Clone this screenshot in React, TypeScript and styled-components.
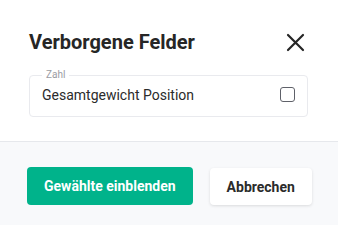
import * as React from 'react'
import styled, { createGlobalStyle } from 'styled-components'

const GlobalStyle = createGlobalStyle`
    html, body {
        margin: 0;
        padding: 0;
        background: #ffffff;
        font-family: Roboto, "Liberation Sans", Arial, sans-serif;
    }
`

const App = () => {
    const [checked, setChecked] = React.useState(false)

    return (
        <Dialog>
            <GlobalStyle />
            <Content>
                <Header>
                    <Title>Verborgene Felder</Title>
                    <CloseButton aria-label="Schließen">
                        <svg width="19" height="19" viewBox="0 0 19 19">
                            <path d="M2 2 L17 17 M17 2 L2 17" stroke="#262626" strokeWidth="2.2" strokeLinecap="round" fill="none" />
                        </svg>
                    </CloseButton>
                </Header>
                <Group>
                    <Legend>Zahl</Legend>
                    <Row>
                        <Label>Gesamtgewicht Position</Label>
                        <Checkbox type="checkbox" checked={checked} onChange={() => setChecked(!checked)} />
                    </Row>
                </Group>
            </Content>
            <Footer>
                <PrimaryButton>Gewählte einblenden</PrimaryButton>
                <SecondaryButton>Abbrechen</SecondaryButton>
            </Footer>
        </Dialog>
    )
}

const Dialog = styled.div`
    width: 338px;
    height: 225px;
    display: flex;
    flex-direction: column;
    background: #fff;
`

const Content = styled.div`
    padding: 30px 30px 0 29px;
    height: 141px;
    box-sizing: border-box;
`

const Header = styled.div`
    display: flex;
    align-items: center;
    justify-content: space-between;
    height: 24px;
`

const Title = styled.h2`
    margin: 0;
    font-size: 20px;
    line-height: 24px;
    font-weight: 700;
    color: #262626;
`

const CloseButton = styled.button`
    border: none;
    background: none;
    padding: 0;
    margin-right: 3px;
    width: 19px;
    height: 19px;
    display: flex;
    cursor: pointer;
`

const Group = styled.fieldset`
    margin: 15px 0 0 0;
    padding: 0 12px 0 12px;
    border: 1px solid #e9eaee;
    border-radius: 4px;
    min-width: 0;
`

const Legend = styled.legend`
    padding: 0 4px;
    font-size: 10px;
    line-height: 12px;
    color: #9a9ca3;
`

const Row = styled.div`
    display: flex;
    align-items: center;
    justify-content: space-between;
    height: 33px;
    margin-top: -3px;
    padding-bottom: 5px;
`

const Label = styled.span`
    font-size: 14px;
    color: #2b2b2b;
`

const Checkbox = styled.input`
    appearance: none;
    width: 15px;
    height: 15px;
    margin: 0 0 0 0;
    border: 1.5px solid #5f6169;
    border-radius: 3px;
    background: #fff;
    box-sizing: border-box;
`

const Footer = styled.div`
    flex: 1;
    display: flex;
    align-items: flex-start;
    gap: 17px;
    padding: 25px 0 0 27px;
    background: #f8f9fb;
    border-top: 1px solid #e6e8ec;
`

const PrimaryButton = styled.button`
    height: 38px;
    padding: 0 17px;
    border: none;
    border-radius: 4px;
    background: #00b38b;
    color: #fff;
    font-family: inherit;
    font-size: 14px;
    font-weight: 700;
    cursor: pointer;
`

const SecondaryButton = styled.button`
    height: 37px;
    margin-top: 1px;
    padding: 0 17px;
    border: none;
    border-radius: 4px;
    background: #fff;
    box-shadow: 0 1px 3px rgba(0, 0, 0, 0.12);
    color: #2b2b2b;
    font-family: inherit;
    font-size: 14px;
    font-weight: 700;
    cursor: pointer;
`

export default App
